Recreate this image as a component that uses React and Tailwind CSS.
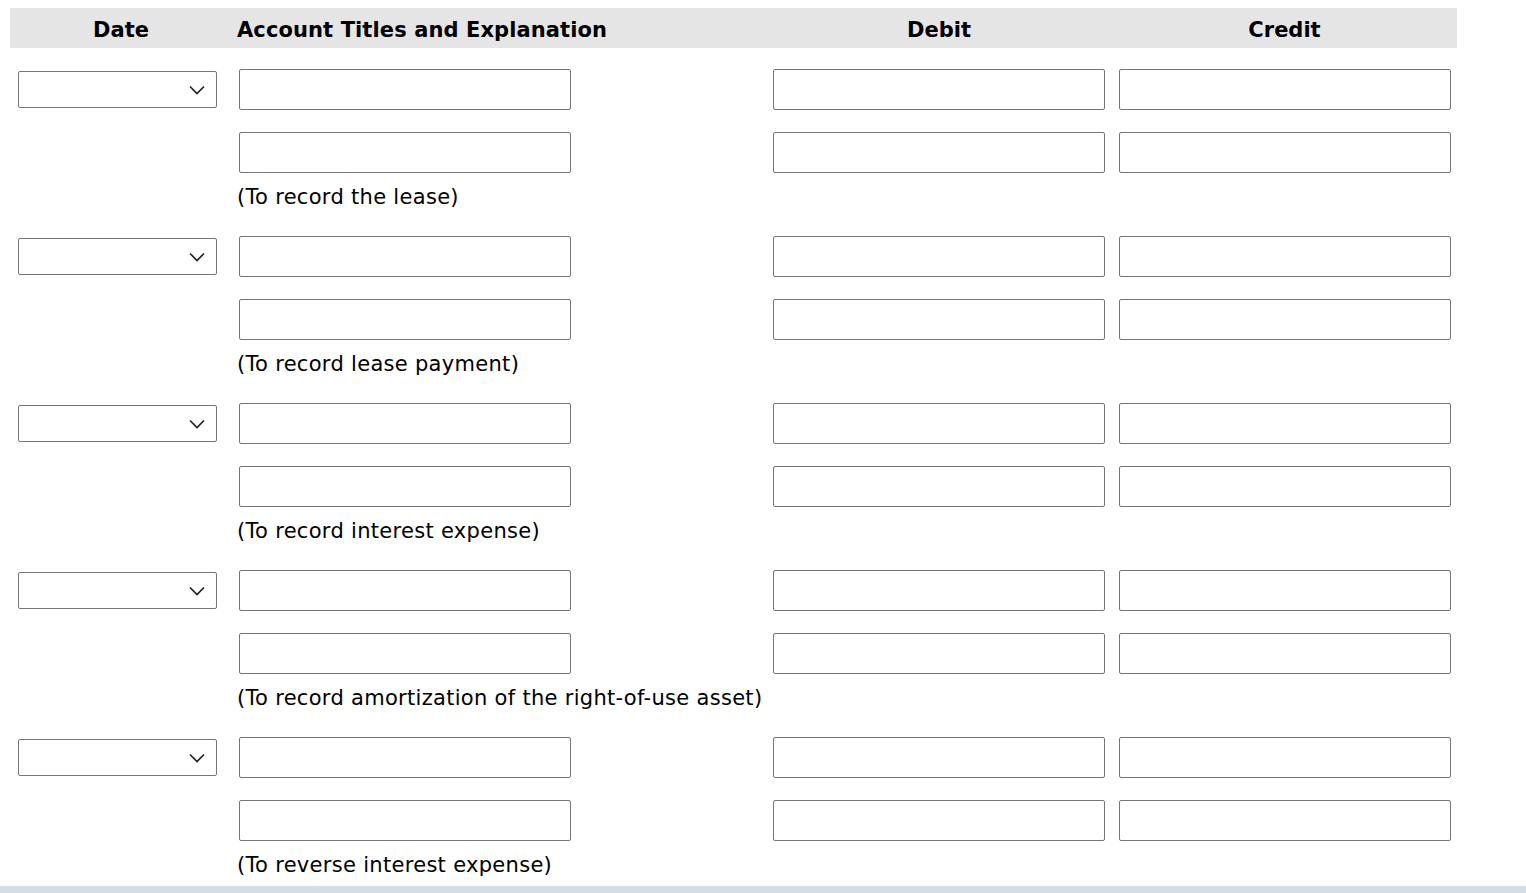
import React from 'react';

const groups = [
  '(To record the lease)',
  '(To record lease payment)',
  '(To record interest expense)',
  '(To record amortization of the right-of-use asset)',
  '(To reverse interest expense)',
];

function Chevron() {
  return (
    <svg width="16" height="10" viewBox="0 0 16 10" fill="none" className="text-[#222]">
      <path d="M1 1.5 L8 8.5 L15 1.5" stroke="currentColor" strokeWidth="1.7" />
    </svg>
  );
}

function Field() {
  return <input type="text" className="ml-[7px] block h-[41px] w-[332px] rounded-[2px] border border-[#767676] bg-white" />;
}

function Entry({ note }) {
  return (
    <div className="mb-[24px] last:mb-[6px]">
      <div className="grid grid-cols-[222px_534px_346px_345px] items-center">
        <div className="pl-[8px]">
          <div className="flex h-[37px] w-[199px] items-center justify-end rounded-[2px] border border-[#767676] bg-white pr-[11px]">
            <Chevron />
          </div>
        </div>
        <Field />
        <Field />
        <Field />
      </div>
      <div className="mt-[22px] grid grid-cols-[222px_534px_346px_345px]">
        <div />
        <Field />
        <Field />
        <Field />
      </div>
      <div className="mt-[10px] grid grid-cols-[222px_1225px]">
        <div />
        <p className="pl-[5px] text-[21px] leading-[29px] tracking-[0.3px] whitespace-nowrap text-black">{note}</p>
      </div>
    </div>
  );
}

export default function App() {
  return (
    <div className="min-h-screen bg-white pt-[8px] font-['DejaVu_Sans',sans-serif]">
      <div className="ml-[10px] w-[1447px]">
        <div className="grid h-[40px] grid-cols-[222px_534px_346px_345px] items-center bg-[#e5e5e5] pt-[5px] text-[21px] font-bold text-black">
          <div className="text-center">Date</div>
          <div className="pl-[5px] tracking-[0.1px]">Account Titles and Explanation</div>
          <div className="text-center">Debit</div>
          <div className="text-center">Credit</div>
        </div>
        <div className="mt-[21px]">
          {groups.map((g) => (
            <Entry key={g} note={g} />
          ))}
        </div>
      </div>
      <div className="h-[12px] bg-[#d4dce4]" />
    </div>
  );
}
